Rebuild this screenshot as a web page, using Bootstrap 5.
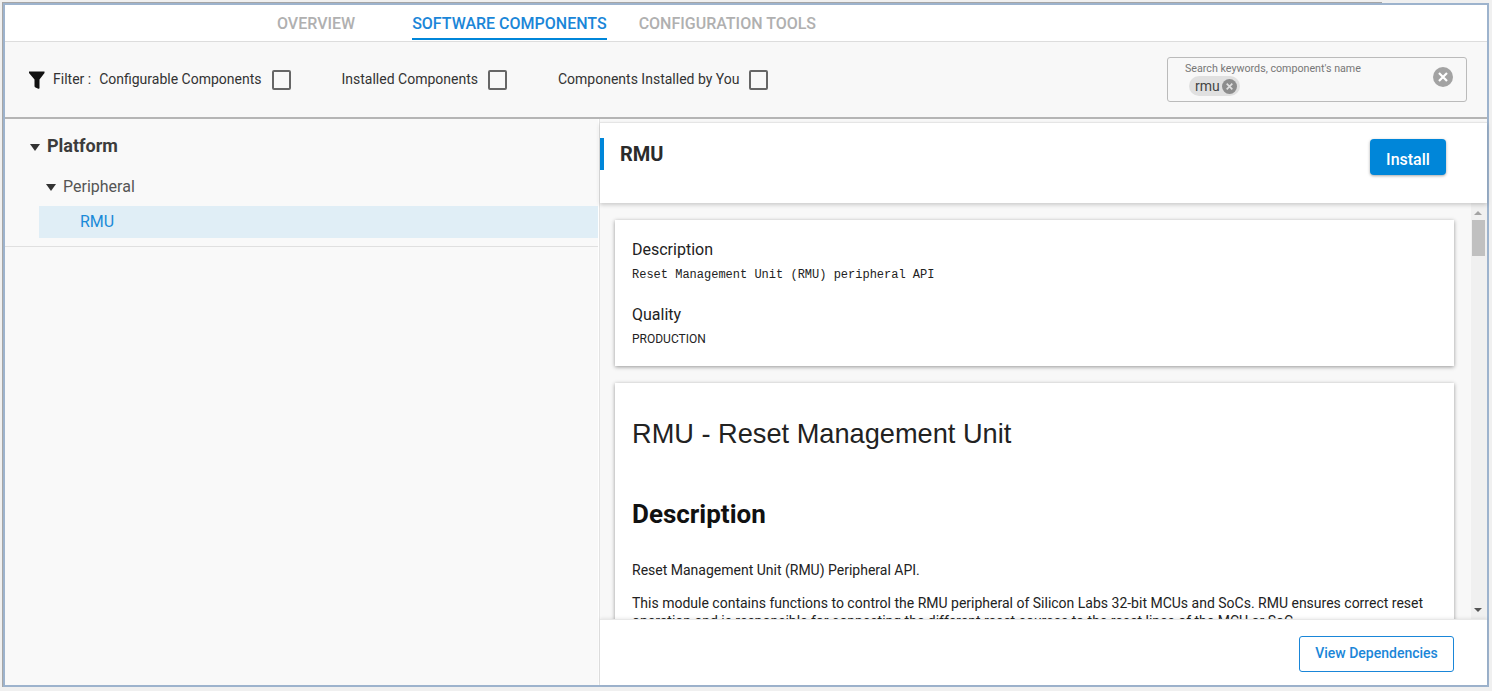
<!DOCTYPE html>
<html lang="en">
<head>
    <meta charset="UTF-8">
    <meta name="viewport" content="width=device-width, initial-scale=1.0">
    <title>Software Components</title>
    <link href="https://cdn.jsdelivr.net/npm/bootstrap@5.3.0/dist/css/bootstrap.min.css" rel="stylesheet">
    <style>
        html, body { height: 100%; }
        body { background: #f0f0f0; font-family: Roboto, "Liberation Sans", sans-serif; color: #333; overflow: hidden; padding: 3px 3px 4px 3px; }
        .frame { height: 684px; width: 1486px; border: 2px solid #9db3cd; background: #fff; position: relative; box-shadow: -1px 0 0 #a6a6a6; }
        .frame::before { content: ""; position: absolute; left: -3px; top: -3px; width: 1380px; height: 1px; background: #a6a6a6; }
        .tab-bar { height: 37px; border-bottom: 1px solid #ddd; padding-left: 272px; gap: 32px; }
        .tab-link { font-size: 16px; font-weight: 500; color: #b0b0b0; height: 35px; line-height: 37px; text-decoration: none; }
        .tab-link.is-on { color: #1a86d8; border-bottom: 2px solid #0086d9; }
        .tab-gap { margin-left: 25px; }
        .filter-bar { height: 77px; background: #f8f8f8; border-bottom: 2px solid #b5b5b5; padding: 0 20px 0 24px; font-size: 14px; color: #333; }
        .check-box { width: 19px; height: 20px; border: 2px solid #666; border-radius: 2px; margin-left: 10px; display: inline-block; }
        .filter-item { margin-right: 50px; }
        .filter-item + .filter-item { margin-left: 1px; }
        .search-box { width: 300px; height: 45px; border: 1px solid #bbb; border-radius: 3px; padding: 4px 0 0 17px; position: relative; }
        .search-label { font-size: 10.700px; line-height: 14px; color: #777; }
        .search-chip { background: #e0e0e0; border-radius: 10px; height: 20px; font-size: 14px; line-height: 20px; width: 51px; margin-left: 4px; padding-left: 6px; color: #444; }
        .chip-x { width: 15px; height: 15px; margin-left: 2px; }
        .clear-x { position: absolute; right: 13px; top: 9px; width: 20px; height: 20px; }
        .main-row { height: 566px; }
        .tree-pane { width: 593px; background: #f9f9f9; flex: none; }
        .tree-head { height: 128px; border-bottom: 1px solid #e0e0e0; padding-top: 13px; }
        .tree-caret { width: 0; height: 0; border-left: 5px solid transparent; border-right: 5px solid transparent; border-top: 7px solid #333; display: inline-block; }
        .tree-top { font-size: 18px; font-weight: 700; color: #3c3c3c; padding-left: 25px; height: 28px; line-height: 28px; }
        .tree-top .tree-caret { margin-right: 7px; }
        .tree-mid { font-size: 16px; color: #555; padding-left: 41px; height: 37px; line-height: 35px; margin-top: 9px; }
        .tree-mid .tree-caret { margin-right: 7px; }
        .tree-leaf { font-size: 16px; color: #1a8ad8; background: #e0eef6; margin-left: 34px; padding-left: 41px; height: 32px; line-height: 32px; }
        .detail-pane { width: 888px; margin-left: 1px; border-left: 1px solid #e3e3e3; flex: none; padding-top: 3px; background: #f9f9f9; }
        .detail-head { height: 81px; background: #fff; border-top: 1px solid #e5e5e5; box-shadow: 0 2px 4px rgba(0,0,0,.18); padding-top: 15px; position: relative; z-index: 2; }
        .detail-title { border-left: 4px solid #0086d9; height: 32px; line-height: 33px; padding-left: 16px; font-size: 20px; font-weight: 700; color: #2b2b2b; }
        .install-btn { background: #0086d9; color: #fff; border: 0; width: 76px; height: 36px; font-size: 16px; font-weight: 500; border-radius: 4px; margin-right: 41px; margin-top: 1px; box-shadow: 0 1px 3px rgba(0,0,0,.35); padding: 6px 0 0; }
        .scroll-zone { height: 416px; background: #f8f8f8; overflow: hidden; }
        .scroll-body { flex: 1; padding: 17px 17px 0 15px; min-width: 0; overflow: hidden; }
        .info-card { background: #fff; box-shadow: 0 1px 4px rgba(0,0,0,.4); padding: 18px 17px 19px; color: #222; }
        .info-card + .info-card { margin-top: 17px; padding-top: 17px; }
        .field-name { font-size: 16px; line-height: 24px; }
        .field-name-next { margin-top: 20px; }
        .field-mono { font-family: "Liberation Mono", monospace; font-size: 12px; line-height: 16px; margin-top: 5px; color: #222; }
        .field-caps { font-size: 12px; line-height: 16px; margin-top: 4px; }
        .doc-h1 { font-family: "Liberation Sans", Arial, sans-serif; font-size: 27.200px; font-weight: 400; line-height: 36px; margin: 16px 0 0; color: #222; }
        .doc-h2 { font-size: 26px; font-weight: 700; line-height: 34px; margin: 45px 0 0; color: #111; }
        .doc-p { font-size: 14px; line-height: 18px; margin: 30px 0 0; color: #222; }
        .doc-p + .doc-p { margin-top: 15px; }
        .scroll-rail { width: 16px; background: #f0f0f0; flex: none; position: relative; }
        .rail-up, .rail-down { position: absolute; left: 3px; width: 0; height: 0; border-left: 4px solid transparent; border-right: 4px solid transparent; }
        .rail-up { top: 8px; border-bottom: 4px solid #a3a3a3; }
        .rail-down { bottom: 7px; border-top: 4px solid #555; }
        .rail-thumb { position: absolute; top: 17px; left: 1px; width: 13px; height: 36px; background: #c0c0c0; }
        .detail-foot { height: 66px; background: #fff; border-top: 1px solid #e8e8e8; box-shadow: 0 -1px 3px rgba(0,0,0,.08); position: relative; z-index: 2; padding: 16px 33px 0 0; }
        .deps-btn { width: 155px; height: 36px; border: 1px solid #1a86d8; border-radius: 3px; background: #fff; color: #1a86d8; font-size: 14px; font-weight: 500; padding: 0 0 2px; }
    </style>
</head>
<body>
    <div class="frame d-flex flex-column">
        <div class="tab-bar d-flex align-items-start">
            <a class="tab-link" href="#">OVERVIEW</a>
            <a class="tab-link is-on tab-gap" href="#">SOFTWARE COMPONENTS</a>
            <a class="tab-link" href="#">CONFIGURATION TOOLS</a>
        </div>

        <div class="filter-bar d-flex align-items-center">
            <svg width="16" height="18" viewBox="0 0 16 18" class="me-2"><path d="M0 0.500h15.500v1.500L10.500 8.500V17q0 1-1.200 .7L6.500 16.500Q5.500 16 5.500 15V8.500L0 2z" fill="#111"/></svg>
            <span class="me-2">Filter :</span>
            <div class="filter-item d-flex align-items-center"><span>Configurable Components</span><span class="check-box"></span></div>
            <div class="filter-item d-flex align-items-center"><span>Installed Components</span><span class="check-box"></span></div>
            <div class="filter-item d-flex align-items-center"><span>Components Installed by You</span><span class="check-box"></span></div>
            <div class="search-box ms-auto">
                <div class="search-label">Search keywords, component's name</div>
                <div class="search-chip d-flex align-items-center">rmu
                    <svg class="chip-x" viewBox="0 0 16 16"><circle cx="8" cy="8" r="8" fill="#8d8d8d"/><path d="M5 5l6 6M11 5l-6 6" stroke="#e0e0e0" stroke-width="1.800"/></svg>
                </div>
                <svg class="clear-x" viewBox="0 0 20 20"><circle cx="10" cy="10" r="10" fill="#a3a3a3"/><path d="M6 6l8 8M14 6l-8 8" stroke="#fff" stroke-width="2.200"/></svg>
            </div>
        </div>

        <div class="main-row d-flex">
            <div class="tree-pane">
                <div class="tree-head">
                    <div class="tree-top"><span class="tree-caret align-middle"></span>Platform</div>
                    <div class="tree-mid"><span class="tree-caret align-middle"></span>Peripheral</div>
                    <div class="tree-leaf">RMU</div>
                </div>
            </div>
            <div class="detail-pane d-flex flex-column">
                <div class="detail-head d-flex justify-content-between align-items-start">
                    <div class="detail-title">RMU</div>
                    <button class="install-btn" type="button">Install</button>
                </div>
                <div class="scroll-zone d-flex">
                    <div class="scroll-body">
                        <div class="info-card">
                            <div class="field-name">Description</div>
                            <div class="field-mono">Reset Management Unit (RMU) peripheral API</div>
                            <div class="field-name field-name-next">Quality</div>
                            <div class="field-caps">PRODUCTION</div>
                        </div>
                        <div class="info-card">
                            <h1 class="doc-h1">RMU - Reset Management Unit</h1>
                            <h2 class="doc-h2">Description</h2>
                            <p class="doc-p">Reset Management Unit (RMU) Peripheral API.</p>
                            <p class="doc-p">This module contains functions to control the RMU peripheral of Silicon Labs 32-bit MCUs and SoCs. RMU ensures correct reset operation and is responsible for connecting the different reset sources to the reset lines of the MCU or SoC.</p>
                        </div>
                    </div>
                    <div class="scroll-rail">
                        <span class="rail-up"></span>
                        <span class="rail-thumb"></span>
                        <span class="rail-down"></span>
                    </div>
                </div>
                <div class="detail-foot d-flex justify-content-end align-items-start">
                    <button class="deps-btn" type="button">View Dependencies</button>
                </div>
            </div>
        </div>
    </div>
    <script src="https://cdn.jsdelivr.net/npm/bootstrap@5.3.0/dist/js/bootstrap.bundle.min.js"></script>
</body>
</html>
